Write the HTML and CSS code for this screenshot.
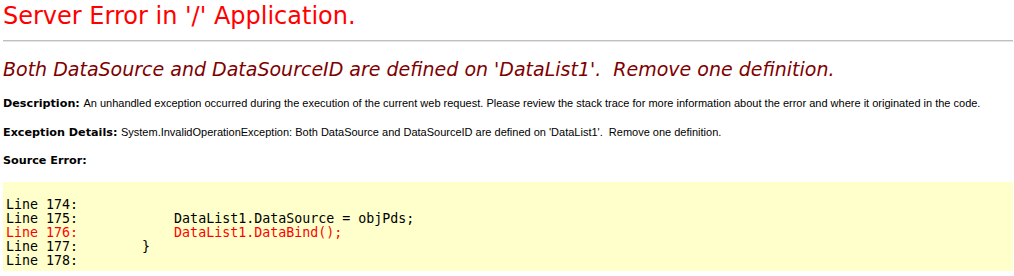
FILE: index.html
```html
<!DOCTYPE html>
<html lang="en">
<head>
    <meta charset="UTF-8">
    <title>Both DataSource and DataSourceID are defined on 'DataList1'.  Remove one definition.</title>
    <link rel="stylesheet" href="styles.css">
</head>
<body>
    <h1 class="page-title">Server Error in '/' Application.</h1>
    <hr class="divider">

    <h2 class="error-title">Both DataSource and DataSourceID are defined on 'DataList1'.&nbsp; Remove one definition.</h2>

    <p class="info"><b>Description:</b> <span class="info-text">An unhandled exception occurred during the execution of the current web request. Please review the stack trace for more information about the error and where it originated in the code.</span></p>

    <p class="info"><b>Exception Details:</b> <span class="info-text">System.InvalidOperationException: Both DataSource and DataSourceID are defined on 'DataList1'.&nbsp; Remove one definition.</span></p>

    <p class="info"><b>Source Error:</b></p>

    <div class="source-box">
<pre class="source-code">Line 174:
Line 175:            DataList1.DataSource = objPds;
<span class="error-line">Line 176:            DataList1.DataBind();</span>
Line 177:        }
Line 178:</pre>
    </div>
</body>
</html>
```

FILE: styles.css
```css
* {
    margin: 0;
    padding: 0;
    box-sizing: border-box;
}

body {
    font-family: Verdana, "DejaVu Sans", sans-serif;
    font-size: 11.2px;
    color: black;
    background: white;
    padding: 0 1px 0 3px;
}

.page-title {
    font-size: 24px;
    font-weight: normal;
    line-height: 28px;
    color: red;
    margin-top: 2px;
}

.divider {
    border: none;
    border-top: 1px solid #c0c0c0;
    border-bottom: 1px solid #e4e4e4;
    margin-top: 10px;
}

.error-title {
    font-size: 19px;
    font-weight: normal;
    font-style: italic;
    line-height: 22px;
    color: maroon;
    margin-top: 16px;
    margin-bottom: 16px;
}

.info {
    line-height: 14px;
    margin-bottom: 14px;
}

.info b {
    font-weight: bold;
}

.info-text {
    font-family: Arial, "Liberation Sans", sans-serif;
    font-size: 11px;
}

.source-box {
    background: #ffffcc;
    padding: 16px 3px 3px;
}

.source-code {
    font-family: Consolas, "DejaVu Sans Mono", monospace;
    font-size: 13.3px;
    line-height: 14px;
}

.error-line {
    color: red;
}
```
